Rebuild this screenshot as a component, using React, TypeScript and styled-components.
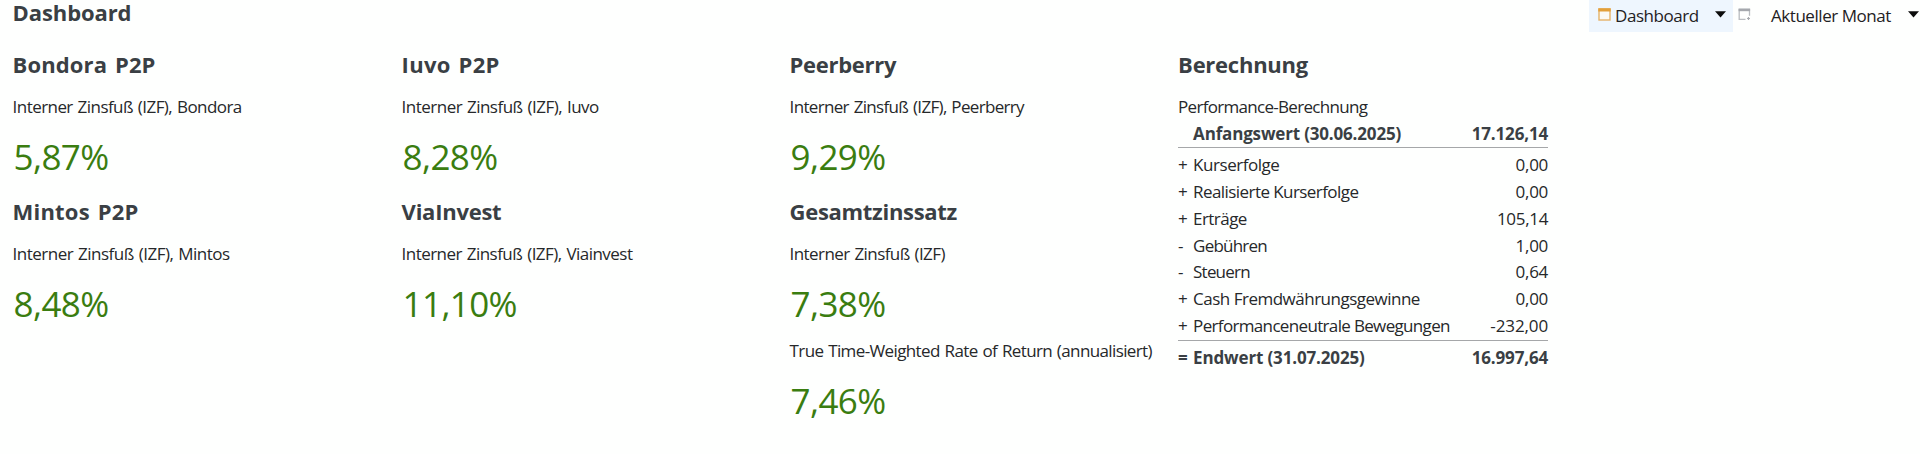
import React from "react";
import styled, { createGlobalStyle } from "styled-components";

const GlobalStyle = createGlobalStyle`
  * { box-sizing: border-box; }
  body {
    margin: 0;
    background: #fefffe;
    color: #26282a;
    font-family: "Open Sans", "Noto Sans", sans-serif;
    font-size: 17px;
    line-height: 26px;
  }
`;

const Page = styled.main`
  height: 454px;
  white-space: nowrap;
`;

const Header = styled.header`
  display: flex;
  justify-content: space-between;
  height: 49px;
  padding-left: 12.6px;
`;

const Title = styled.h1<{ $track: number }>`
  margin: 0;
  font-size: 22px;
  line-height: 25px;
  font-weight: 700;
  color: #3a3f44;
  letter-spacing: ${(p) => p.$track}px;
`;

const Toolbar = styled.div`
  display: flex;
  align-items: flex-start;
`;

const ToolButton = styled.button<{ $active?: boolean; $width: number; $pad: number }>`
  display: flex;
  align-items: center;
  width: ${(p) => p.$width}px;
  height: 32px;
  padding: 0 0 3px ${(p) => p.$pad}px;
  border: 0;
  font: inherit;
  color: #1f2123;
  text-align: left;
  background: ${(p) => (p.$active ? "#eef6fe" : "transparent")};
`;

const ToolLabel = styled.span<{ $width: number; $gap?: number }>`
  width: ${(p) => p.$width}px;
  margin-left: ${(p) => p.$gap ?? 0}px;
  padding-top: 3px;
  letter-spacing: -0.45px;
`;

const Icon = styled.svg`
  display: block;
  flex: none;
`;

const Columns = styled.div`
  display: grid;
  grid-template-columns: 389px 388px 388.5px 370px;
  padding-left: 12.6px;
`;

const Column = styled.div`
  display: flex;
  flex-direction: column;
  gap: 19px;
`;

const Heading = styled.h2<{ $track: number }>`
  margin: 0 0 14px;
  font-size: 22px;
  line-height: 31px;
  font-weight: 700;
  color: #3a3f44;
  letter-spacing: ${(p) => p.$track}px;
  word-spacing: 2px;
`;

const Label = styled.div<{ $track: number }>`
  letter-spacing: ${(p) => p.$track}px;
  word-spacing: 1px;
`;

const Value = styled.div`
  margin-top: 17px;
  padding-left: 1px;
  font-size: 35px;
  line-height: 40px;
  letter-spacing: -0.62px;
  color: #3a7d10;

  & + ${Label} {
    margin-top: 14px;
  }
`;

const Calculation = styled.div`
  display: flex;
  flex-direction: column;
  width: 370px;
  margin-top: 1px;
`;

const CalcRow = styled.div<{ $total?: "start" | "end" }>`
  display: grid;
  grid-template-columns: 15px 1fr auto;
  line-height: ${(p) => (p.$total ? 26 : 26.85)}px;
  font-weight: ${(p) => (p.$total ? 700 : 400)};
  color: ${(p) => (p.$total ? "#3a3f44" : "inherit")};
  ${(p) => p.$total === "start" && "margin-bottom: 4px; border-bottom: 1px solid #a5a7a9;"}
  ${(p) => p.$total === "end" && "padding-top: 4px; border-top: 1px solid #a5a7a9;"}
`;

const CalcText = styled.span<{ $track: number }>`
  letter-spacing: ${(p) => p.$track}px;
`;

type Metric = { label: string; track: number; value: string };
type Widget = { title: string; track: number; metrics: Metric[] };

const columns: Widget[][] = [
  [
    { title: "Bondora P2P", track: 0.12, metrics: [{ label: "Interner Zinsfuß (IZF), Bondora", track: -0.56, value: "5,87%" }] },
    { title: "Mintos P2P", track: 0.2, metrics: [{ label: "Interner Zinsfuß (IZF), Mintos", track: -0.51, value: "8,48%" }] },
  ],
  [
    { title: "Iuvo P2P", track: 0.28, metrics: [{ label: "Interner Zinsfuß (IZF), Iuvo", track: -0.52, value: "8,28%" }] },
    { title: "ViaInvest", track: -0.25, metrics: [{ label: "Interner Zinsfuß (IZF), Viainvest", track: -0.54, value: "11,10%" }] },
  ],
  [
    { title: "Peerberry", track: -0.3, metrics: [{ label: "Interner Zinsfuß (IZF), Peerberry", track: -0.67, value: "9,29%" }] },
    {
      title: "Gesamtzinssatz",
      track: -0.3,
      metrics: [
        { label: "Interner Zinsfuß (IZF)", track: -0.58, value: "7,38%" },
        { label: "True Time-Weighted Rate of Return (annualisiert)", track: -0.62, value: "7,46%" },
      ],
    },
  ],
];

type Entry = { sign: string; label: string; track: number; amount: string; amountTrack: number; total?: "start" | "end" };

const entries: Entry[] = [
  { sign: "", label: "Anfangswert (30.06.2025)", track: -0.17, amount: "17.126,14", amountTrack: -0.15, total: "start" },
  { sign: "+", label: "Kurserfolge", track: -0.46, amount: "0,00", amountTrack: -0.25 },
  { sign: "+", label: "Realisierte Kurserfolge", track: -0.57, amount: "0,00", amountTrack: -0.25 },
  { sign: "+", label: "Erträge", track: -0.56, amount: "105,14", amountTrack: -0.3 },
  { sign: "-", label: "Gebühren", track: -0.8, amount: "1,00", amountTrack: -0.25 },
  { sign: "-", label: "Steuern", track: -0.8, amount: "0,64", amountTrack: -0.25 },
  { sign: "+", label: "Cash Fremdwährungsgewinne", track: -0.5, amount: "0,00", amountTrack: -0.25 },
  { sign: "+", label: "Performanceneutrale Bewegungen", track: -0.66, amount: "-232,00", amountTrack: -0.1 },
  { sign: "=", label: "Endwert (31.07.2025)", track: -0.15, amount: "16.997,64", amountTrack: -0.15, total: "end" },
];

const Caret = () => (
  <Icon width="11" height="7" viewBox="0 0 11 7">
    <path d="M0 0.3h11L5.5 6.5z" fill="#0c0c0c" />
  </Icon>
);

const DashboardIcon = () => (
  <Icon width="13" height="13" viewBox="0 0 13 13">
    <rect x="1" y="1" width="11" height="11" fill="#fbfaf5" stroke="#e5b368" strokeWidth="1.4" />
    <path d="M0.3 0.3h12.4v3.2H0.3z" fill="#e3a03a" />
  </Icon>
);

const NewViewIcon = () => (
  <Icon width="13" height="13" viewBox="0 0 13 13">
    <path d="M7.5 11.3H1.2V1.5h10.3v6.2" fill="none" stroke="#b9bcc0" strokeWidth="1.3" />
    <path d="M0.6 0.6h11.5v2.6H0.6z" fill="#a5a8ad" />
    <path d="M10.5 9v3M9 10.5h3" stroke="#a8abb0" strokeWidth="1.2" />
  </Icon>
);

export default function App() {
  return (
    <Page>
      <GlobalStyle />
      <Header>
        <Title $track={-0.1}>Dashboard</Title>
        <Toolbar>
          <ToolButton $active $width={144} $pad={9}>
            <DashboardIcon />
            <ToolLabel $width={100} $gap={4}>Dashboard</ToolLabel>
            <Caret />
          </ToolButton>
          <ToolButton $width={32} $pad={5}>
            <NewViewIcon />
          </ToolButton>
          <ToolButton $width={155} $pad={6}>
            <ToolLabel $width={137}>Aktueller Monat</ToolLabel>
            <Caret />
          </ToolButton>
        </Toolbar>
      </Header>
      <Columns>
        {columns.map((widgets, i) => (
          <Column key={i}>
            {widgets.map((widget) => (
              <section key={widget.title}>
                <Heading $track={widget.track}>{widget.title}</Heading>
                {widget.metrics.map((m) => (
                  <React.Fragment key={m.label}>
                    <Label $track={m.track}>{m.label}</Label>
                    <Value>{m.value}</Value>
                  </React.Fragment>
                ))}
              </section>
            ))}
          </Column>
        ))}
        <section>
          <Heading $track={-0.25}>Berechnung</Heading>
          <Label $track={-0.7}>Performance-Berechnung</Label>
          <Calculation>
            {entries.map((e) => (
              <CalcRow key={e.label} $total={e.total}>
                <span>{e.sign}</span>
                <CalcText $track={e.track}>{e.label}</CalcText>
                <CalcText $track={e.amountTrack}>{e.amount}</CalcText>
              </CalcRow>
            ))}
          </Calculation>
        </section>
      </Columns>
    </Page>
  );
}
